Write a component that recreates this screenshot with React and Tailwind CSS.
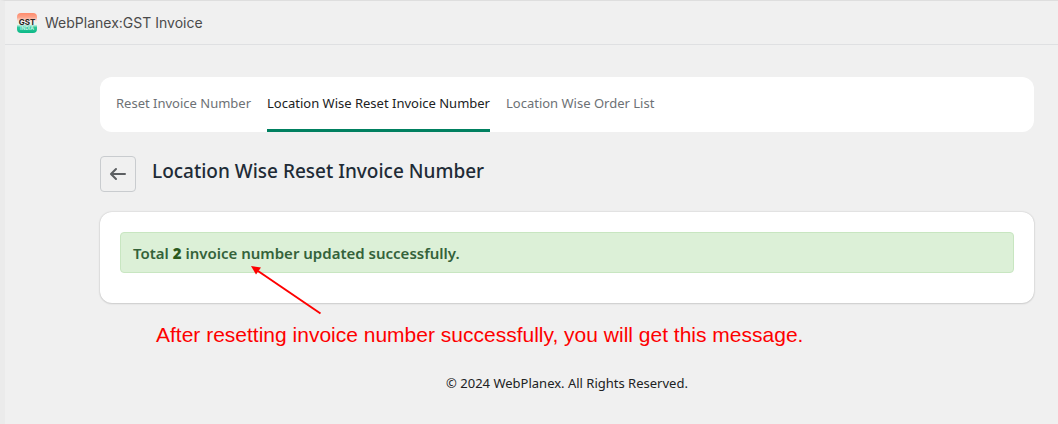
const tabs = [
  { label: 'Reset Invoice Number', href: '#reset' },
  { label: 'Location Wise Reset Invoice Number', href: '#location-reset', active: true },
  { label: 'Location Wise Order List', href: '#location-orders' },
];

const AppLogo = () => (
  <svg className="w-5 h-5" viewBox="0 0 20 20" aria-hidden="true">
    <defs>
      <linearGradient id="flag" x1="0" y1="0" x2="0" y2="1">
        <stop offset="0" stopColor="#ff8a6b" />
        <stop offset="0.22" stopColor="#fba58d" />
        <stop offset="0.42" stopColor="#f8ece8" />
        <stop offset="0.58" stopColor="#e3f5ef" />
        <stop offset="0.72" stopColor="#2cc79a" />
        <stop offset="1" stopColor="#0cb886" />
      </linearGradient>
    </defs>
    <rect width="20" height="20" rx="4" fill="url(#flag)" />
    <text
      x="10"
      y="12"
      textAnchor="middle"
      fontFamily="Inter, sans-serif"
      fontSize="8"
      fontWeight="700"
      fill="#222222"
    >
      GST
    </text>
    <text
      x="10"
      y="17"
      textAnchor="middle"
      fontFamily="Inter, sans-serif"
      fontSize="5"
      fontWeight="700"
      fill="#c4f3e5"
    >
      INDIA
    </text>
  </svg>
);

const BackIcon = () => (
  <svg
    className="w-5 h-5"
    viewBox="0 0 20 20"
    fill="none"
    stroke="#5c5f62"
    strokeWidth="2"
    strokeLinecap="round"
    strokeLinejoin="round"
    aria-hidden="true"
  >
    <path d="M17 10H3.5M8 5L3 10l5 5" />
  </svg>
);

const App = () => {
  return (
    <div className="min-h-screen bg-[#f0f0f0] border-t border-[#dedede] border-l-5 border-l-[#ebebeb] font-['Noto_Sans',sans-serif] text-[#202223]">
      <header className="flex items-center gap-2 h-11 px-3 border-b border-[#dfe0e2]">
        <AppLogo />
        <span className="font-['Inter',sans-serif] text-sm text-[#4a4a4a]">
          WebPlanex:GST Invoice
        </span>
      </header>

      <main className="pl-[95px] pr-6 pt-8">
        <nav className="flex gap-4 h-[55px] px-4 bg-white rounded-xl">
          {tabs.map((tab) => (
            <a
              key={tab.label}
              href={tab.href}
              className={
                tab.active
                  ? 'pt-4 text-[13px] leading-5 whitespace-nowrap border-b-3 border-[#008060] text-[#202223]'
                  : 'pt-4 text-[13px] leading-5 whitespace-nowrap text-[#6d7175]'
              }
            >
              {tab.label}
            </a>
          ))}
        </nav>

        <div className="flex gap-4 mt-6">
          <button
            type="button"
            aria-label="Back"
            className="flex items-center justify-center w-9 h-9 border border-[#c9cccf] rounded"
          >
            <BackIcon />
          </button>
          <h1 className="text-[19px] leading-[30px] font-medium text-[#212b36]">
            Location Wise Reset Invoice Number
          </h1>
        </div>

        <section className="relative mt-5 px-5 pt-5 pb-[30px] bg-white rounded-xl shadow-[0_0_2px_rgba(0,0,0,0.2),0_1px_2px_rgba(0,0,0,0.1)]">
          <div
            role="status"
            className="px-3 pt-[9px] pb-2 text-[15px] leading-[22px] font-semibold text-[#34623a] bg-[#dcf0d7] border border-[#c8e6c1] rounded-sm"
          >
            Total <strong className="font-black text-[#2b5a1c]">2</strong> invoice number updated
            successfully.
          </div>
          <svg
            className="absolute left-[150px] top-[53px] w-[72px] h-[50px]"
            viewBox="0 0 72 50"
            aria-hidden="true"
          >
            <path d="M8 6L70.5 48.5" stroke="#fe0000" strokeWidth="2" />
            <path d="M1 1L11 2.5L6 9.5Z" fill="#fe0000" />
          </svg>
        </section>

        <p className="mt-4 pl-14 text-[21px] leading-8 font-['Liberation_Sans',sans-serif] text-[#fe0000]">
          After resetting invoice number successfully, you will get this message.
        </p>

        <footer className="mt-[22px] pb-6 text-center text-[13px] leading-5">
          © 2024 WebPlanex. All Rights Reserved.
        </footer>
      </main>
    </div>
  );
};

export default App;
